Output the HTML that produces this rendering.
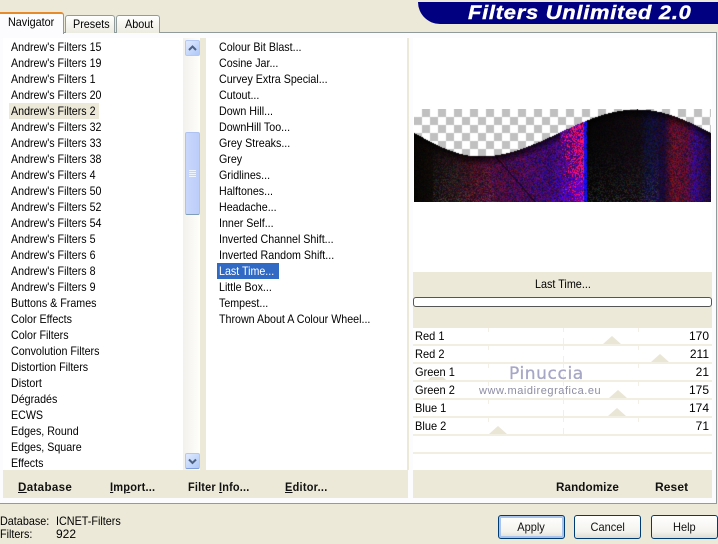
<!DOCTYPE html>
<html><head><meta charset="utf-8">
<style>
html,body{margin:0;padding:0;width:718px;height:544px;overflow:hidden;background:#ECE9D8;font-family:"Liberation Sans",sans-serif;font-size:12px;color:#000}
div,canvas,svg{position:absolute;box-sizing:border-box}
.t{white-space:nowrap;line-height:16px;transform-origin:0 50%;transform:scaleX(.9)}
.row{left:11px;height:16px;line-height:16px;white-space:nowrap;transform-origin:0 50%;transform:scaleX(.89)}
.lab{left:415px;height:16px;line-height:16px;white-space:nowrap;transform-origin:0 50%;transform:scaleX(.92)}
.val{right:9px;height:16px;line-height:16px;text-align:right}
.ln{left:413px;width:299px;height:2px;background:#F1EFE2}
.b{font-weight:bold;line-height:16px;white-space:nowrap;top:479px;color:#111;transform-origin:0 50%}
.btn{top:515px;width:67px;height:24px;border:1px solid #003C74;border-radius:3px;background:linear-gradient(#fff,#F4F3EE 70%,#DFDDD2);text-align:center;line-height:23px;color:#111}
.btn span{display:inline-block;transform:scaleX(.92)}
u{text-decoration:underline}
</style></head><body>

<div style="left:418px;top:2px;width:300px;height:22px;background:#000080;border-radius:0 0 0 24px"></div>
<div class="t" style="left:468px;top:2px;height:22px;line-height:23px;color:#fff;font-weight:bold;font-style:italic;font-size:19px;letter-spacing:.66px;-webkit-text-stroke:.4px #fff;transform:scaleX(1.15)">Filters Unlimited 2.0</div>

<div style="left:0;top:32px;width:717px;height:472px;background:#FCFCFE;border:1px solid #919B9C;border-left:0"></div>

<div style="left:65px;top:15px;width:50px;height:18px;background:linear-gradient(#fff,#ECEBE0);border:1px solid #919B9C;border-bottom:0;border-radius:3px 3px 0 0"></div>
<div style="left:116px;top:15px;width:44px;height:18px;background:linear-gradient(#fff,#ECEBE0);border:1px solid #919B9C;border-bottom:0;border-radius:3px 3px 0 0"></div>
<div style="left:0;top:12px;width:64px;height:22px;background:#FCFCFE;border-top:2px solid #E68B2C;border-right:1px solid #919B9C;border-radius:0 3px 0 0"></div>
<div class="t" style="left:8px;top:14px">Navigator</div>
<div class="t" style="left:73px;top:16px">Presets</div>
<div class="t" style="left:125px;top:16px">About</div>

<!-- List 1 -->
<div style="left:3px;top:38px;width:180px;height:432px;background:#fff"></div>
<div style="left:9px;top:103px;width:90px;height:16px;background:#ECE9D8"></div>
<div class="row" style="top:39px">Andrew's Filters 15</div>
<div class="row" style="top:55px">Andrew's Filters 19</div>
<div class="row" style="top:71px">Andrew's Filters 1</div>
<div class="row" style="top:87px">Andrew's Filters 20</div>
<div class="row" style="top:103px">Andrew's Filters 2</div>
<div class="row" style="top:119px">Andrew's Filters 32</div>
<div class="row" style="top:135px">Andrew's Filters 33</div>
<div class="row" style="top:151px">Andrew's Filters 38</div>
<div class="row" style="top:167px">Andrew's Filters 4</div>
<div class="row" style="top:183px">Andrew's Filters 50</div>
<div class="row" style="top:199px">Andrew's Filters 52</div>
<div class="row" style="top:215px">Andrew's Filters 54</div>
<div class="row" style="top:231px">Andrew's Filters 5</div>
<div class="row" style="top:247px">Andrew's Filters 6</div>
<div class="row" style="top:263px">Andrew's Filters 8</div>
<div class="row" style="top:279px">Andrew's Filters 9</div>
<div class="row" style="top:295px">Buttons &amp; Frames</div>
<div class="row" style="top:311px">Color Effects</div>
<div class="row" style="top:327px">Color Filters</div>
<div class="row" style="top:343px">Convolution Filters</div>
<div class="row" style="top:359px">Distortion Filters</div>
<div class="row" style="top:375px">Distort</div>
<div class="row" style="top:391px">Dégradés</div>
<div class="row" style="top:407px">ECWS</div>
<div class="row" style="top:423px">Edges, Round</div>
<div class="row" style="top:439px">Edges, Square</div>
<div class="row" style="top:455px">Effects</div>

<!-- Scrollbar -->
<div style="left:183px;top:38px;width:17px;height:432px;background:linear-gradient(90deg,#F3F1EC,#FEFEFB)"></div>
<div style="left:185px;top:40px;width:15px;height:16px;background:linear-gradient(135deg,#E1EAFE,#AEC8F7);border:1px solid #B4C8F6;border-radius:2px"></div>
<svg style="left:185px;top:40px" width="15" height="16"><path d="M4 10 L7.500 6.500 L11 10" fill="none" stroke="#4D6185" stroke-width="2"/></svg>
<div style="left:185px;top:132px;width:15px;height:83px;background:linear-gradient(90deg,#C9D7FC,#BCCDF9);border:1px solid #AFC3F3;border-bottom:1px solid #7F9DB9;border-radius:2px"></div>
<svg style="left:185px;top:132px" width="15" height="83"><path d="M4 38.500h7M4 40.500h7M4 42.500h7M4 44.500h7" stroke="#EEF4FE" stroke-width="1"/></svg>
<div style="left:185px;top:453px;width:15px;height:16px;background:linear-gradient(135deg,#E1EAFE,#AEC8F7);border:1px solid #B4C8F6;border-bottom:1px solid #7F9DD9;border-radius:2px"></div>
<svg style="left:185px;top:453px" width="15" height="16"><path d="M4 6.500 L7.500 10 L11 6.500" fill="none" stroke="#4D6185" stroke-width="2"/></svg>

<div style="left:200px;top:38px;width:6px;height:432px;background:#ECE9D8"></div>

<!-- List 2 -->
<div style="left:206px;top:38px;width:201px;height:432px;background:#fff"></div>
<div style="left:217px;top:263px;width:62px;height:16px;background:#316AC5"></div>
<div class="row" style="left:219px;top:39px">Colour Bit Blast...</div>
<div class="row" style="left:219px;top:55px">Cosine Jar...</div>
<div class="row" style="left:219px;top:71px">Curvey Extra Special...</div>
<div class="row" style="left:219px;top:87px">Cutout...</div>
<div class="row" style="left:219px;top:103px">Down Hill...</div>
<div class="row" style="left:219px;top:119px">DownHill Too...</div>
<div class="row" style="left:219px;top:135px">Grey Streaks...</div>
<div class="row" style="left:219px;top:151px">Grey</div>
<div class="row" style="left:219px;top:167px">Gridlines...</div>
<div class="row" style="left:219px;top:183px">Halftones...</div>
<div class="row" style="left:219px;top:199px">Headache...</div>
<div class="row" style="left:219px;top:215px">Inner Self...</div>
<div class="row" style="left:219px;top:231px">Inverted Channel Shift...</div>
<div class="row" style="left:219px;top:247px">Inverted Random Shift...</div>
<div class="row" style="left:219px;top:263px;color:#fff">Last Time...</div>
<div class="row" style="left:219px;top:279px">Little Box...</div>
<div class="row" style="left:219px;top:295px">Tempest...</div>
<div class="row" style="left:219px;top:311px">Thrown About A Colour Wheel...</div>

<div style="left:407px;top:38px;width:2px;height:432px;background:#ECE9D8"></div>

<!-- Right panel -->
<div style="left:413px;top:38px;width:299px;height:234px;background:#fff"></div>
<canvas id="c" width="297" height="93" style="left:414px;top:109px;width:297px;height:93px"></canvas>

<div style="left:413px;top:272px;width:299px;height:56px;background:#ECE9D8"></div>
<div class="t" style="left:535px;top:276px">Last Time...</div>
<div style="left:413px;top:297px;width:299px;height:10px;background:#fff;border:1px solid #555;border-radius:3px"></div>

<div style="left:413px;top:328px;width:299px;height:142px;background:#fff"></div>
<svg style="left:413px;top:328px" width="299" height="142">
<g stroke="#F1EFE6" stroke-width="1">
<path d="M75.500 0v4M150.500 0v4M225.500 0v4M75.500 18v4M150.500 18v4M225.500 18v4M75.500 36v4M150.500 36v4M225.500 36v4M75.500 54v4M150.500 54v4M225.500 54v4M75.500 72v4M150.500 72v4M225.500 72v4M75.500 90v4M150.500 90v4M225.500 90v4M150.500 10v6M150.500 28v6M150.500 46v6M150.500 64v6M150.500 82v6M150.500 100v6"/>
</g>
<g fill="#E9E6D6">
<polygon points="190,16 199,8 208,16"/>
<polygon points="238,34 247,26 256,34"/>
<polygon points="15,52 18,49 30,49 33,52"/>
<polygon points="196,70 205,62 214,70"/>
<polygon points="195,88 204,80 213,88"/>
<polygon points="76,106 85,98 94,106"/>
</g>
</svg>
<div class="ln" style="top:344px"></div>
<div class="ln" style="top:362px"></div>
<div class="ln" style="top:380px"></div>
<div class="ln" style="top:398px"></div>
<div class="ln" style="top:416px"></div>
<div class="ln" style="top:434px"></div>
<div class="ln" style="top:452px"></div>

<div class="lab" style="top:328px">Red 1</div><div class="val" style="top:328px">170</div>
<div class="lab" style="top:346px">Red 2</div><div class="val" style="top:346px">211</div>
<div class="lab" style="top:364px">Green 1</div><div class="val" style="top:364px">21</div>
<div class="lab" style="top:382px">Green 2</div><div class="val" style="top:382px">175</div>
<div class="lab" style="top:400px">Blue 1</div><div class="val" style="top:400px">174</div>
<div class="lab" style="top:418px">Blue 2</div><div class="val" style="top:418px">71</div>

<div class="t" style="left:509px;top:364px;line-height:20px;color:#A6A6C6;letter-spacing:.6px;font-family:'DejaVu Sans',sans-serif;font-size:17px;transform:none;-webkit-text-stroke:.3px #A6A6C6">Pinuccia</div>
<div class="t" style="left:479px;top:384px;font-size:11px;line-height:14px;color:#8C8CA3;letter-spacing:.55px;transform:none">www.maidiregrafica.eu</div>

<!-- Bottom strips -->
<div style="left:3px;top:470px;width:405px;height:28px;background:#ECE9D8"></div>
<div style="left:413px;top:470px;width:299px;height:28px;background:#ECE9D8"></div>
<div class="b" style="left:18px;transform:scaleX(.965);letter-spacing:.35px"><u>D</u>atabase</div>
<div class="b" style="left:110px;transform:scaleX(.92);letter-spacing:.2px"><u>I</u>m<u>p</u>ort...</div>
<div class="b" style="left:188px;transform:scaleX(.91);letter-spacing:.2px">Filter <u>I</u>nfo...</div>
<div class="b" style="left:285px;transform:scaleX(.91);letter-spacing:.3px"><u>E</u>ditor...</div>
<div class="b" style="left:556px;transform:scaleX(.97);letter-spacing:.1px">Randomize</div>
<div class="b" style="left:655px;letter-spacing:.1px">Reset</div>

<!-- Status -->
<div class="t" style="left:0;top:513px">Database:</div>
<div class="t" style="left:56px;top:513px">ICNET-Filters</div>
<div class="t" style="left:0;top:526px">Filters:</div>
<div class="t" style="left:56px;top:526px;transform:none">922</div>

<!-- Buttons -->
<div class="btn" style="left:498px;box-shadow:inset 0 0 0 2px #A9C4EC"><span>Apply</span></div>
<div class="btn" style="left:574px"><span>Cancel</span></div>
<div class="btn" style="left:651px;width:67px"><span>Help</span></div>

<script>
(function(){
var c=document.getElementById('c'),g=c.getContext('2d'),W=297,H=93;
var d=g.createImageData(W,H),p=d.data,s=12345;
function r(){s^=s<<13;s^=s>>>17;s^=s<<5;return (s>>>0)/4294967296}
var K=[[-66,0],[66,47],[223,0],[371,47]];
function wave(x){
 for(var i=0;i<K.length-1;i++){
  if(x<=K[i+1][0]){
   var t=(x-K[i][0])/(K[i+1][0]-K[i][0]);
   var u=(1-Math.cos(Math.PI*t))/2;
   return K[i][1]+(K[i+1][1]-K[i][1])*u;
  }
 }
 return 24;
}
var S=[[0,6,6,4],[15,14,10,8],[40,32,18,22],[60,58,12,28],[80,70,14,58],[110,66,12,85],[135,58,10,105],[150,75,10,125],[170,75,10,125],[172,5,5,5],[225,16,10,16],[235,15,15,50],[250,28,10,50],[258,90,16,38],[272,80,14,52],[280,55,10,115],[297,28,10,52]];
function mean(x){
 for(var i=0;i<S.length-1;i++){
  if(x<=S[i+1][0]){
   var a=S[i],b=S[i+1],t=(x-a[0])/(b[0]-a[0]);
   return [a[1]+(b[1]-a[1])*t,a[2]+(b[2]-a[2])*t,a[3]+(b[3]-a[3])*t];
  }
 }
 return [25,10,50];
}
function px(x,y,w){
 var m=mean(x),n1=r(),n2=r(),n3=r(),v=y/92;
 var R=m[0]*(.35+1.3*n1),G=m[1]*(.35+1.3*n2),B=m[2]*(.35+1.3*n3);
 // speckle brighter toward the bottom in the dark zones
 if((x>18&&x<80)||(x>172&&x<245)){
  var k=v*v*48*(r()<.45?1:0);
  R+=k*r();G+=k*r();B+=k*r();
 }
 // blue speckle in the lower purple area
 if(x>135&&x<170&&y>62&&r()<(x-135)/70){R=60;G=0;B=235;}
 // red band
 if(x>=146&&x<170){
  var q=(x-146)/24,h=r();
  if(h<q*(y<68?.62:.26)){R=255;G=15;B=70+70*r();}
  else if(h<q*.75){R=120;G=0;B=200;}
 }
 if(x>=170&&x<173){R=15;G=15;B=255;if(r()<.12){B=90}}
 // diagonal dark crease
 var dl=Math.abs((y-17)-(x-55)*1.15);
 if(x>50&&dl<1.2){R*=.5;G*=.5;B*=.5;}
 // darkening under the curve
 var e=Math.min(1,(y-w)/10);
 if(!(x>=146&&x<173)){var f=.25+.75*e;R*=f;G*=f;B*=f;}
 return [R,G,B];
}
for(var y=0;y<H;y++)for(var x=0;x<W;x++){
 var i=(y*W+x)*4,w=wave(x),col;
 if(y>=w){col=px(x,y,w);}
 else{
  var v=(((x>>3)+(y>>3))&1)===1?192:255;
  col=[v,v,v];
 }
 p[i]=col[0];p[i+1]=col[1];p[i+2]=col[2];p[i+3]=255;
}
g.putImageData(d,0,0);
})();
</script>
</body></html>
